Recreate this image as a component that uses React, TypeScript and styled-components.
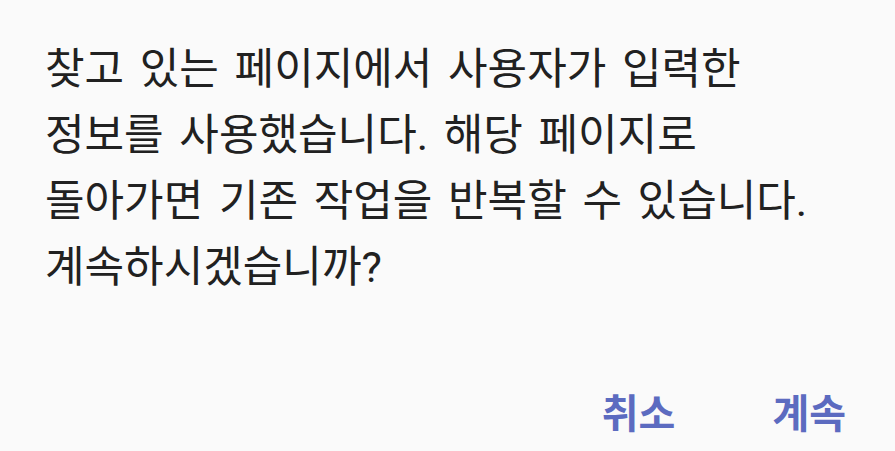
import React from 'react';
import styled, { createGlobalStyle } from 'styled-components';

const GlobalStyle = createGlobalStyle`
  html, body {
    margin: 0;
    padding: 0;
    background-color: #fafafa;
  }
`;

const Dialog = styled.div`
  width: 895px;
  height: 451px;
  box-sizing: border-box;
  background-color: #fafafa;
  display: flex;
  flex-direction: column;
  justify-content: space-between;
  padding: 36px 49px 10px 45px;
  font-family: Roboto, "Noto Sans CJK KR", sans-serif;
`;

const Message = styled.p`
  margin: 0;
  color: #212121;
  font-size: 43px;
  line-height: 66px;
  word-spacing: 5px;
`;

const Actions = styled.div`
  display: flex;
  justify-content: flex-end;
  align-items: center;
  gap: 97px;
  height: 60px;
`;

const ActionButton = styled.button`
  background: none;
  border: none;
  padding: 0;
  color: #5c6bc0;
  font-family: inherit;
  font-size: 40px;
  font-weight: 700;
  cursor: pointer;
`;

const App: React.FC = () => {
  return (
    <>
      <GlobalStyle />
      <Dialog>
        <Message>
          찾고 있는 페이지에서 사용자가 입력한
          <br />
          정보를 사용했습니다. 해당 페이지로
          <br />
          돌아가면 기존 작업을 반복할 수 있습니다.
          <br />
          계속하시겠습니까?
        </Message>
        <Actions>
          <ActionButton>취소</ActionButton>
          <ActionButton>계속</ActionButton>
        </Actions>
      </Dialog>
    </>
  );
};

export default App;
